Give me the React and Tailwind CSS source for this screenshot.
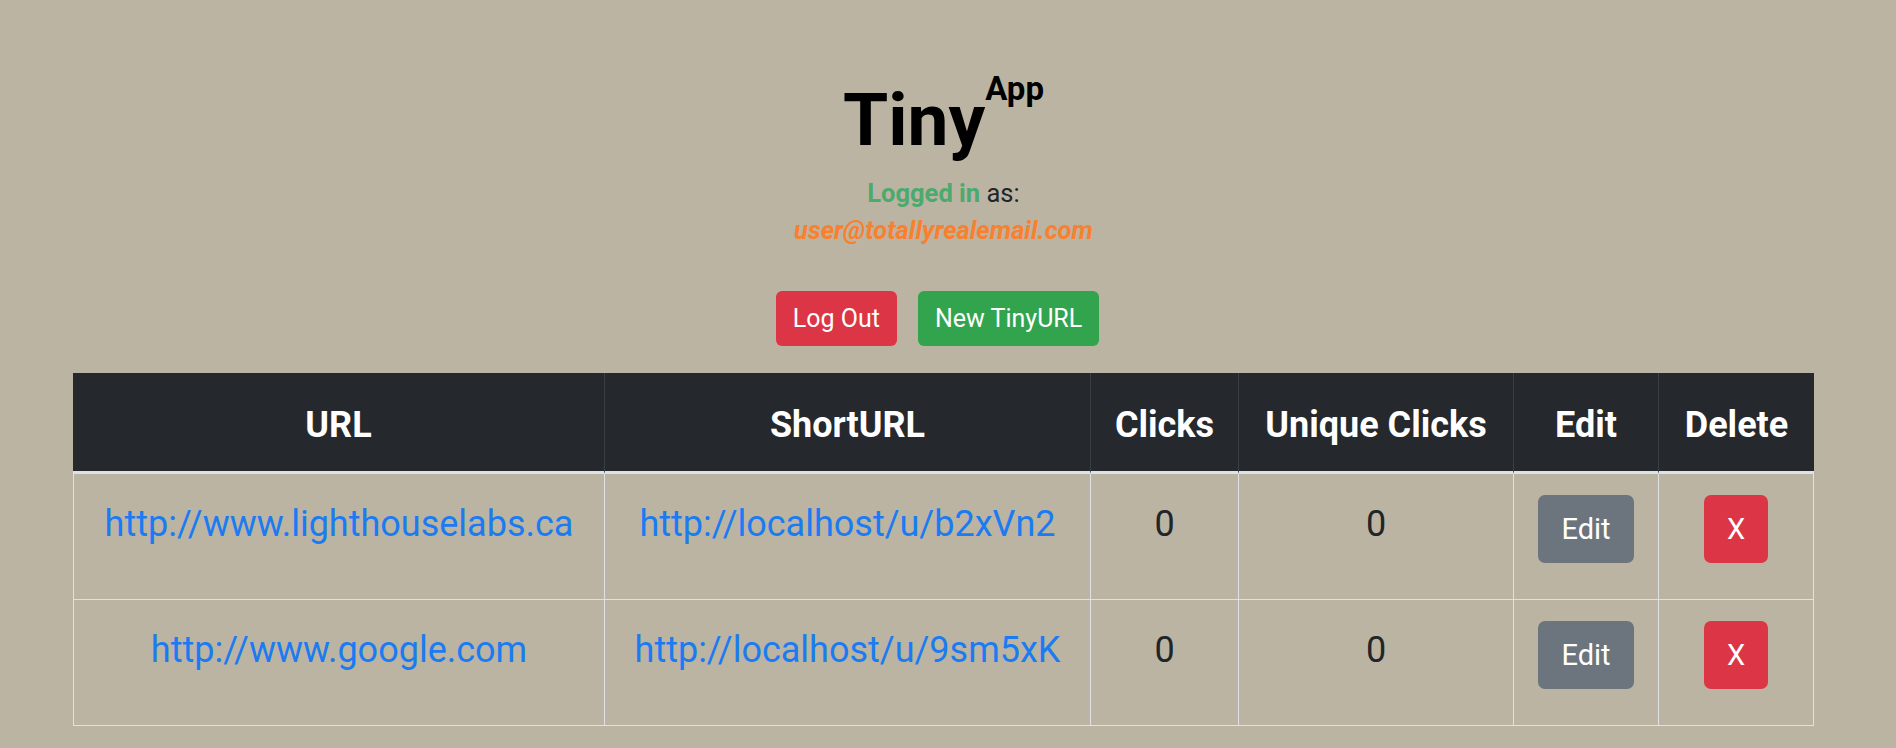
export default function App() {
  const rows = [
    { url: "http://www.lighthouselabs.ca", short: "http://localhost/u/b2xVn2" },
    { url: "http://www.google.com", short: "http://localhost/u/9sm5xK" },
  ];
  const cols = "grid grid-cols-[532px_486px_148px_275px_145px_155px]";
  const heads = ["URL", "ShortURL", "Clicks", "Unique Clicks", "Edit", "Delete"];
  return (
    <div
      className="min-h-screen w-full bg-[#bbb4a2] text-[#212529]"
      style={{ fontFamily: "Roboto, 'Noto Sans', 'Liberation Sans', sans-serif" }}
    >
      <div className="ml-[73px] w-[1741px] flex flex-col items-center pt-[72px]">
        <div className="flex items-start text-black font-bold">
          <span className="mt-[12px] text-[73px] leading-none">Tiny</span>
          <span className="text-[33px] leading-none">App</span>
        </div>
        <div className="mt-[18px] text-[25.5px] leading-[37px] text-center">
          <div>
            <span className="font-bold text-[#4caa6e]">Logged in</span>{" "}
            <span>as:</span>
          </div>
          <div className="font-bold italic text-[#f9802e]">user@totallyrealemail.com</div>
        </div>
        <div className="mt-[42px] mr-[12px] flex gap-[21px]">
          <button className="h-[55px] px-[17px] rounded-[6px] bg-[#dc3545] text-white text-[25px] leading-none">
            Log Out
          </button>
          <button className="h-[55px] px-[17px] rounded-[6px] bg-[#32a44e] text-white text-[25px] leading-none">
            New TinyURL
          </button>
        </div>
        <div className="mt-[27px] w-[1741px]">
          <div className={cols}>
            {heads.map((h, i) => (
              <div
                key={h}
                className={
                  "h-[101px] bg-[#25292d] border-b-[3px] border-b-[#dee2e6] pt-[25px] text-center text-white font-bold text-[36px] leading-[54px] " +
                  (i < 5 ? "border-r border-r-[#3a3f45]" : "")
                }
              >
                {h}
              </div>
            ))}
          </div>
          {rows.map((r, idx) => (
            <div key={idx} className={cols}>
              <div className="h-[126px] border-l border-r border-b border-[#dee2e6] pt-[23px] text-center text-[36px] leading-[54px]">
                <a className="text-[#1a7bf2]">{r.url}</a>
              </div>
              <div className="h-[126px] border-r border-b border-[#dee2e6] pt-[23px] text-center text-[36px] leading-[54px]">
                <a className="text-[#1a7bf2]">{r.short}</a>
              </div>
              <div className="h-[126px] border-r border-b border-[#dee2e6] pt-[23px] text-center text-[36px] leading-[54px]">
                0
              </div>
              <div className="h-[126px] border-r border-b border-[#dee2e6] pt-[23px] text-center text-[36px] leading-[54px]">
                0
              </div>
              <div className="h-[126px] border-r border-b border-[#dee2e6] pt-[21px] flex justify-center items-start">
                <button className="h-[68px] px-[23px] rounded-[7px] bg-[#6c757d] text-white text-[29px] leading-none">
                  Edit
                </button>
              </div>
              <div className="h-[126px] border-r border-b border-[#dee2e6] pt-[21px] flex justify-center items-start">
                <button className="h-[68px] w-[64px] rounded-[7px] bg-[#dc3545] text-white text-[29px] leading-none">
                  X
                </button>
              </div>
            </div>
          ))}
        </div>
      </div>
    </div>
  );
}
